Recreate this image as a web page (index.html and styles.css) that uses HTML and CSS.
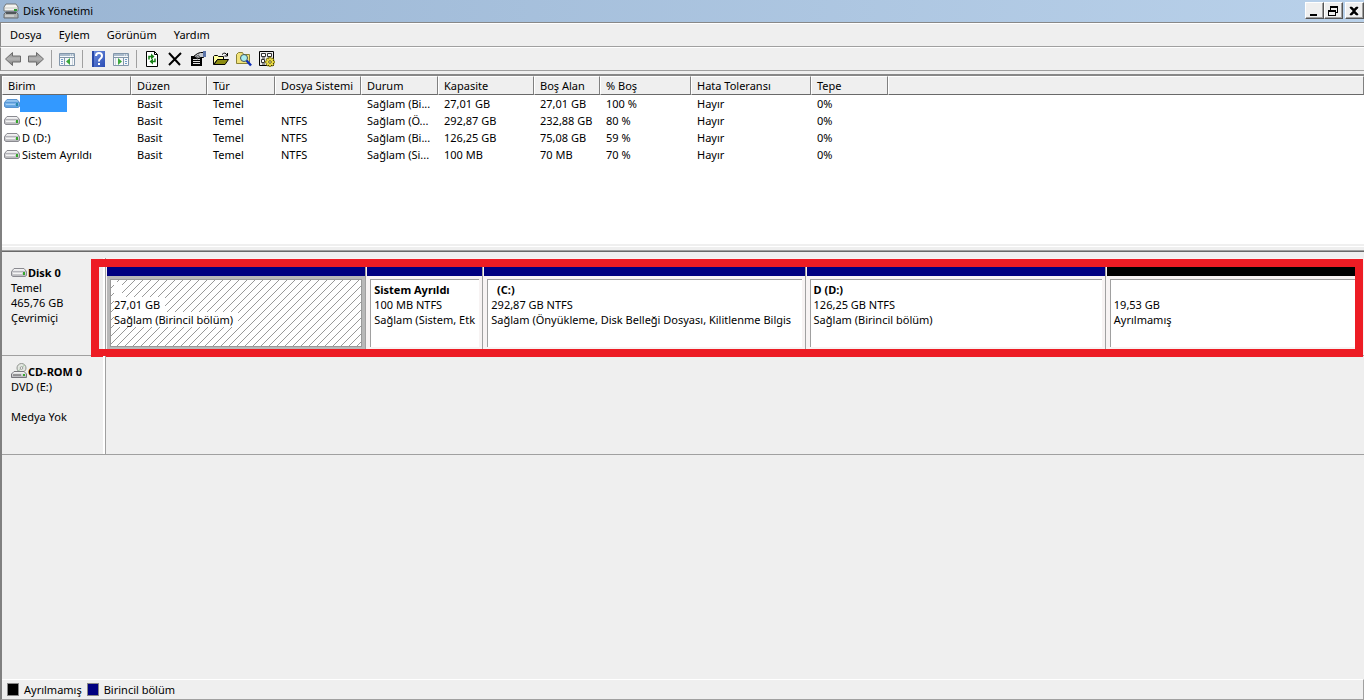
FILE: index.html
```html
<!DOCTYPE html>
<html lang="tr">
<head>
<meta charset="utf-8">
<title>Disk Yönetimi</title>
<link rel="stylesheet" href="styles.css">
</head>
<body>
<svg class="defs" aria-hidden="true">
  <defs>
    <linearGradient id="metal" x1="0" y1="0" x2="0" y2="1"><stop offset="0" stop-color="#fafafa"/><stop offset="1" stop-color="#b4b4b8"/></linearGradient>
    <linearGradient id="bluemetal" x1="0" y1="0" x2="0" y2="1"><stop offset="0" stop-color="#9cc8f0"/><stop offset="1" stop-color="#5a9ee0"/></linearGradient>
    <linearGradient id="grey" x1="0" y1="0" x2="0" y2="1"><stop offset="0" stop-color="#8a8a8a"/><stop offset=".5" stop-color="#b4b4b4"/><stop offset="1" stop-color="#747474"/></linearGradient>
    <linearGradient id="help" x1="0" y1="0" x2="1" y2="1"><stop offset="0" stop-color="#6f90e0"/><stop offset="1" stop-color="#2b4db4"/></linearGradient>
    <symbol id="drive" viewBox="0 0 16 9">
      <path d="M3 .5h10l2.500 3v4l-1.500 1H2L.5 7.500v-4z" fill="url(#metal)" stroke="#8a8a90"/>
      <path d="M1 3.500h14" stroke="#b4b4ba"/><path d="M2 5.500h9" stroke="#f4f4f4"/><path d="M12 4h2v3h-2z" fill="#35a52b"/>
    </symbol>
    <symbol id="drive-blue" viewBox="0 0 16 9">
      <path d="M3 .5h10l2.500 3v4l-1.500 1H2L.5 7.500v-4z" fill="url(#bluemetal)" stroke="#5a94d0"/>
      <path d="M1 3.500h14" stroke="#5a9ad8"/><path d="M2 5.500h9" stroke="#a4d0f6"/><path d="M12 4h2v3h-2z" fill="#2a8bab"/>
    </symbol>
  </defs>
</svg>
<div class="window">
  <header class="title-bar">
    <svg class="app-icon" viewBox="0 0 16 16"><path d="M3 1h10l2 3v4H1V4z" fill="#f4f4f0" stroke="#74787a"/><path d="M2 5h12" stroke="#c8c8c4"/><path d="M11 6h3v2h-3z" fill="#2f9b36"/><path d="M3 9h10l2 2v4H1v-4z" fill="#aeb2b2" stroke="#686c70"/><path d="M3 9h10v2H3z" fill="#50565a"/><path d="M2 13h9" stroke="#e6e6e6"/></svg>
    <h1 class="title">Disk Yönetimi</h1>
    <div class="controls">
      <button class="control" aria-label="Küçült"><svg viewBox="0 0 14 12"><path d="M3 9h7v2H3z"/></svg></button>
      <button class="control" aria-label="Önceki boyut"><svg viewBox="0 0 14 12"><path d="M4 1h8v7h-2V7h1V3H5v2H4zM2 5h8v6H2zm1 2v3h6V7z" fill-rule="evenodd"/></svg></button>
      <button class="control close" aria-label="Kapat"><svg viewBox="0 0 14 12"><path d="M3 2h2l2 2 2-2h2v1L8 6l3 3v1H9L7 8l-2 2H3V9l3-3-3-3z" stroke="#000" stroke-width=".5"/></svg></button>
    </div>
  </header>
  <nav class="menu-bar">
    <button class="menu">Dosya</button><button class="menu">Eylem</button><button class="menu">Görünüm</button><button class="menu">Yardım</button>
  </nav>
  <div class="toolbar">
    <button class="tool" aria-label="Geri"><svg viewBox="0 0 16 16"><path d="M.5 8l7-6.500v3.500h8v6h-8v3.500z" fill="url(#grey)" stroke="#6c6c6c"/></svg></button>
    <button class="tool" aria-label="İleri"><svg viewBox="0 0 16 16"><path d="M15.500 8l-7-6.500v3.500h-8v6h8v3.500z" fill="url(#grey)" stroke="#6c6c6c"/></svg></button>
    <span class="divider"></span>
    <button class="tool" aria-label="Konsol ağacı"><svg viewBox="0 0 16 16"><path d="M.5 2.500h15v12H.5z" fill="#f6f8fa" stroke="#8296aa"/><path d="M1 3h14v2H1z" fill="#a9bacb"/><path d="M11 4h1m1 0h1" stroke="#fff"/><path d="M1 6.500h14M5.500 7v7" stroke="#8296aa"/><path d="M2 8.500h2m-2 2h2m-2 2h2" stroke="#6f9bc6"/><path d="M11 7v7l-4-3.500z" fill="#3ca83c"/><path d="M13.500 7v7" stroke="#c9d3dd"/></svg></button>
    <span class="divider"></span>
    <button class="tool" aria-label="Yardım"><svg viewBox="0 0 16 16"><path d="M2 0h13v16H2z" fill="url(#help)"/><path d="M2 0h2v16H2z" fill="#2848a8"/><path d="M6 5q0-3 3-3t3 3q0 1.500-2 3-1 .7-1 2.500" fill="none" stroke="#fff" stroke-width="2"/><path d="M8 12h2v2H8z" fill="#fff"/></svg></button>
    <button class="tool" aria-label="Eylem bölmesi"><svg viewBox="0 0 16 16"><path d="M.5 2.500h15v12H.5z" fill="#f6f8fa" stroke="#8296aa"/><path d="M1 3h14v2H1z" fill="#a9bacb"/><path d="M11 4h1m1 0h1" stroke="#fff"/><path d="M1 6.500h14M10.500 7v7" stroke="#8296aa"/><path d="M12 8.500h2m-2 2h2m-2 2h2" stroke="#6f9bc6"/><path d="M5 7v7l4-3.500z" fill="#3ca83c"/><path d="M2.500 7v7" stroke="#c9d3dd"/></svg></button>
    <span class="divider"></span>
    <button class="tool" aria-label="Yenile"><svg viewBox="0 0 16 16"><path d="M2.500.5h8l3 3v12h-11z" fill="#fff" stroke="#000"/><path d="M10.500.5v3h3" fill="none" stroke="#000"/><path d="M5 8.500V5.500h2.500M11 7.500v3H8.500" fill="none" stroke="#168016" stroke-width="1.500"/><path d="M7 2.500v6l3.500-3zM9 7.500v6l-3.500-3z" fill="#168016"/></svg></button>
    <button class="tool" aria-label="Sil"><svg viewBox="0 0 16 16"><path d="M2 2l11 12M14 2L2 14" fill="none" stroke="#000" stroke-width="2"/></svg></button>
    <button class="tool" aria-label="Özellikler"><svg viewBox="0 0 16 16"><path d="M1 5h11v10H1z"/><path d="M3 8.500h7m-7 2h7m-7 2h7" stroke="#ddd"/><path d="M3.500 5.500l4-3 3-1h3v5h-3l-3 1.500-2-2z" fill="#c4c8ce" stroke="#000"/><path d="M6 5.500l3-1.500M7 7l3-2" stroke="#555"/><path d="M13 0h3v6h-3z" fill="#5b74a8"/></svg></button>
    <button class="tool" aria-label="Aç"><svg viewBox="0 0 16 16"><path d="M.5 13.500v-8l1-1h3l1 1h5v3h-6z" fill="#ffffa0" stroke="#000"/><path d="M1 13.500l3.500-5h11l-3.500 5z" fill="#8c8c10" stroke="#000"/><path d="M9 3.500q3-3 5 .5m.5-2v3h-3" fill="none" stroke="#000"/></svg></button>
    <button class="tool" aria-label="Bul"><svg viewBox="0 0 16 16"><path d="M.5 12.500v-9l2-2h4l1 2h6v9z" fill="#f1e27a" stroke="#8a8236"/><circle cx="8" cy="7" r="3.500" fill="#a9eef2" stroke="#42545c"/><path d="M10.500 9.500l4.500 5" stroke="#1030b8" stroke-width="2.500"/></svg></button>
    <button class="tool" aria-label="Ayarlar"><svg viewBox="0 0 16 16"><path d="M.5.5h14v14H.5z" fill="#eee" stroke="#000"/><path d="M2.500 2.500h4v3h-4zM8.500 2.500h4v3h-4zM2.500 8.500h3v3h-3z" fill="#fff" stroke="#333"/><path d="M3 7h3m3 0h3m-9 6h3" stroke="#333"/><path d="M11 6v10M6 11h10M7.500 7.500l7 7m0-7l-7 7" stroke="#6b6100" stroke-width="2.500"/><path d="M11 6.500v9M6.500 11h9M8 8l6 6m0-6l-6 6" stroke="#efe04a" stroke-width="1.500"/><circle cx="11" cy="11" r="3" fill="#efe04a"/><circle cx="11" cy="11" r="1.300" fill="#fff" stroke="#665c00"/></svg></button>
  </div>

  <main class="content">
    <section class="volumes">
      <table class="volume-table">
        <colgroup><col class="c-name"><col class="c-layout"><col class="c-type"><col class="c-fs"><col class="c-status"><col class="c-cap"><col class="c-free"><col class="c-pct"><col class="c-fault"><col class="c-over"><col></colgroup>
        <thead><tr><th>Birim</th><th>Düzen</th><th>Tür</th><th>Dosya Sistemi</th><th>Durum</th><th>Kapasite</th><th>Boş Alan</th><th>% Boş</th><th>Hata Toleransı</th><th>Tepe</th><th></th></tr></thead>
        <tbody>
          <tr><td class="name"><div class="volume"><svg class="drive"><use href="#drive-blue"/></svg><span class="selected"></span></div></td><td>Basit</td><td>Temel</td><td></td><td>Sağlam (Bi...</td><td>27,01 GB</td><td>27,01 GB</td><td>100 %</td><td>Hayır</td><td>0%</td><td></td></tr>
          <tr><td class="name"><div class="volume"><svg class="drive"><use href="#drive"/></svg><span class="volume-name">&nbsp;(C:)</span></div></td><td>Basit</td><td>Temel</td><td>NTFS</td><td>Sağlam (Ö...</td><td>292,87 GB</td><td>232,88 GB</td><td>80 %</td><td>Hayır</td><td>0%</td><td></td></tr>
          <tr><td class="name"><div class="volume"><svg class="drive"><use href="#drive"/></svg><span class="volume-name">D (D:)</span></div></td><td>Basit</td><td>Temel</td><td>NTFS</td><td>Sağlam (Bi...</td><td>126,25 GB</td><td>75,08 GB</td><td>59 %</td><td>Hayır</td><td>0%</td><td></td></tr>
          <tr><td class="name"><div class="volume"><svg class="drive"><use href="#drive"/></svg><span class="volume-name">Sistem Ayrıldı</span></div></td><td>Basit</td><td>Temel</td><td>NTFS</td><td>Sağlam (Si...</td><td>100 MB</td><td>70 MB</td><td>70 %</td><td>Hayır</td><td>0%</td><td></td></tr>
        </tbody>
      </table>
    </section>
    <div class="splitter"></div>
    <section class="disks">
      <div class="disk">
        <div class="disk-label">
          <h2 class="disk-name"><svg class="drive"><use href="#drive"/></svg>Disk 0</h2>
          <p>Temel</p><p>465,76 GB</p><p>Çevrimiçi</p>
        </div>
        <div class="partitions">
          <div class="partition p-first"><div class="bar"></div><div class="box hatched"><b>&nbsp;</b><span>27,01 GB</span><span>Sağlam (Birincil bölüm)</span></div></div>
          <div class="partition p-system"><div class="bar"></div><div class="box"><b>Sistem Ayrıldı</b><span>100 MB NTFS</span><span>Sağlam (Sistem, Etk</span></div></div>
          <div class="partition p-c"><div class="bar"></div><div class="box"><b>&nbsp; (C:)</b><span>292,87 GB NTFS</span><span>Sağlam (Önyükleme, Disk Belleği Dosyası, Kilitlenme Bilgis</span></div></div>
          <div class="partition p-d"><div class="bar"></div><div class="box"><b>D (D:)</b><span>126,25 GB NTFS</span><span>Sağlam (Birincil bölüm)</span></div></div>
          <div class="partition p-free"><div class="bar unallocated"></div><div class="box"><b>&nbsp;</b><span>19,53 GB</span><span>Ayrılmamış</span></div></div>
        </div>
        <div class="highlight"></div>
      </div>
      <div class="disk cd">
        <div class="disk-label">
          <h2 class="disk-name"><svg class="cd-icon" viewBox="0 0 16 16"><circle cx="10.500" cy="5" r="4.500" fill="#e4e8e2" stroke="#90948f"/><path d="M10.500 5l3-3M10.500 5l-3 3" stroke="#9bc49b"/><circle cx="10.500" cy="5" r="1.300" fill="#fff" stroke="#999"/><path d="M3 8.500h10l2.500 2.500v3.500H.5V11z" fill="url(#metal)" stroke="#77777c"/><path d="M2 12h8" stroke="#555"/><path d="M12 11h2v2h-2z" fill="#35a52b"/></svg>CD-ROM 0</h2>
          <p>DVD (E:)</p><p>&nbsp;</p><p>Medya Yok</p>
        </div>
        <div class="empty"></div>
      </div>
    </section>
    <footer class="legend"><span class="swatch unallocated"></span><span>Ayrılmamış</span><span class="swatch primary"></span><span>Birincil bölüm</span></footer>
  </main>
</div>
</body>
</html>
```
FILE: styles.css
```css
* { box-sizing: border-box; }
body { margin: 0; background: #efefef; color: #000; font: 11px/15px "Noto Sans", "Open Sans", sans-serif; }
h1, h2, p { margin: 0; font-size: inherit; font-weight: normal; }
button { padding: 0; border: 0; background: none; color: inherit; font: inherit; }
.defs { position: absolute; width: 0; height: 0; }
.window { display: flex; flex-direction: column; height: 100vh; overflow: hidden; }

.title-bar { display: flex; align-items: center; gap: 4px; height: 22px; padding: 0 0 1px 3px; background: linear-gradient(90deg, #9ab5d3, #b9d1ea); }
.app-icon { width: 16px; height: 16px; }
.title { flex: 1; }
.controls { display: flex; }
.control { width: 19px; height: 17px; background: #efefef; border: 1px solid; border-color: #fff #555 #555 #fff; box-shadow: inset -1px -1px #a0a0a0; }
.control svg { display: block; width: 14px; height: 12px; margin: 1px; }
.close { margin-left: 2px; }

.menu-bar { display: flex; gap: 17px; height: 25px; padding: 0 9px; border-top: 1px solid #888; border-bottom: 1px solid #a0a0a0; border-left: 1px solid #888; box-shadow: inset 0 1px #fff; }
.toolbar { display: flex; align-items: center; gap: 7px; height: 24px; padding: 0 4px; border-top: 1px solid #fff; border-bottom: 1px solid #a0a0a0; border-left: 1px solid #888; }
.tool { width: 16px; height: 16px; }
.tool svg { display: block; width: 16px; height: 16px; }
.divider { width: 1px; height: 18px; background: #a0a0a0; }

.content { display: flex; flex: 1; flex-direction: column; min-height: 0; margin-top: 3px; border-top: 2px solid #888; border-left: 2px solid #808080; border-bottom: 1px solid #a0a0a0; }
.volumes { height: 168px; background: #fff; overflow: hidden; }
.volume-table { width: 100%; table-layout: fixed; border-collapse: separate; border-spacing: 0; }
.volume-table th { height: 19px; padding: 0 5px; background: #efefef; border: 1px solid; border-color: #fff #808080 #696969 #fff; font-weight: normal; text-align: left; white-space: nowrap; }
.volume-table td { height: 17px; padding: 0 0 0 6px; white-space: nowrap; }
.volume-table td.name { padding-left: 2px; }
.c-name { width: 129px; } .c-layout { width: 76px; } .c-type { width: 68px; }
.c-fs { width: 86px; } .c-status { width: 77px; } .c-cap { width: 96px; }
.c-free { width: 66px; } .c-pct { width: 91px; } .c-fault { width: 120px; } .c-over { width: 77px; }
.volume { display: flex; align-items: center; height: 17px; }
.drive { width: 16px; height: 9px; }
.volume-name { padding-left: 2px; }
.selected { width: 47px; height: 17px; background: #3399ff; }
.splitter { height: 8px; background: linear-gradient(#efefef 2px, #fff 2px 3px, #efefef 3px); border-bottom: 1px solid #696969; box-shadow: inset 0 -1px #a0a0a0; }

.disks { flex: 1; padding-top: 6px; overflow: hidden; }
.disk { position: relative; display: flex; height: 98px; border-bottom: 1px solid #a0a0a0; }
.disk-label { flex: none; width: 104px; padding: 7px 9px; border-right: 1px solid #a0a0a0; box-shadow: inset -2px 0 #fff; }
.disk-name { display: flex; align-items: center; gap: 1px; font-weight: bold; white-space: nowrap; }
.partitions { display: flex; flex: 1; gap: 2px; min-width: 0; padding: 9px 9px 6px 1px; background: #f7f3f3; }
.partition { display: flex; flex-direction: column; min-width: 0; box-shadow: 1px 0 #a0a0a0; }
.p-first { flex: 258 1 0; } .p-system { flex: 115 1 0; } .p-c { flex: 320 1 0; }
.p-d { flex: 298 1 0; } .p-free { flex: 248 1 0; box-shadow: none; }
.bar { flex: none; height: 9px; background: #000080; }
.unallocated { background: #000; }
.box { display: flex; flex: 1; flex-direction: column; align-items: flex-start; margin: 3px 3px 2px; padding: 2px 3px; overflow: hidden; background: #fff; border-top: 1px solid #a0a0a0; border-left: 1px solid #a0a0a0; white-space: nowrap; }
.p-free .box { margin-right: 0; }
.p-first { background: #b8b8b8; }
.hatched { border: 1px solid #999; background: #fff linear-gradient(135deg, transparent 46%, #999 46% 54%, transparent 54%) 0 0 / 8px 8px; }
.hatched b, .hatched span { padding-right: 5px; background: #fff; }
.highlight { position: absolute; inset: 1px 1px -2px 89px; border: 8px solid #ed1c24; }
.cd { height: 99px; }
.cd-icon { width: 16px; height: 16px; }
.empty { flex: 1; }

.legend { display: flex; align-items: center; gap: 5px; height: 20px; padding: 0 5px; border-top: 1px solid #fff; border-right: 1px solid #a0a0a0; }
.swatch { width: 12px; height: 13px; border: 1px solid #888; }
.primary { background: #000080; }
```
